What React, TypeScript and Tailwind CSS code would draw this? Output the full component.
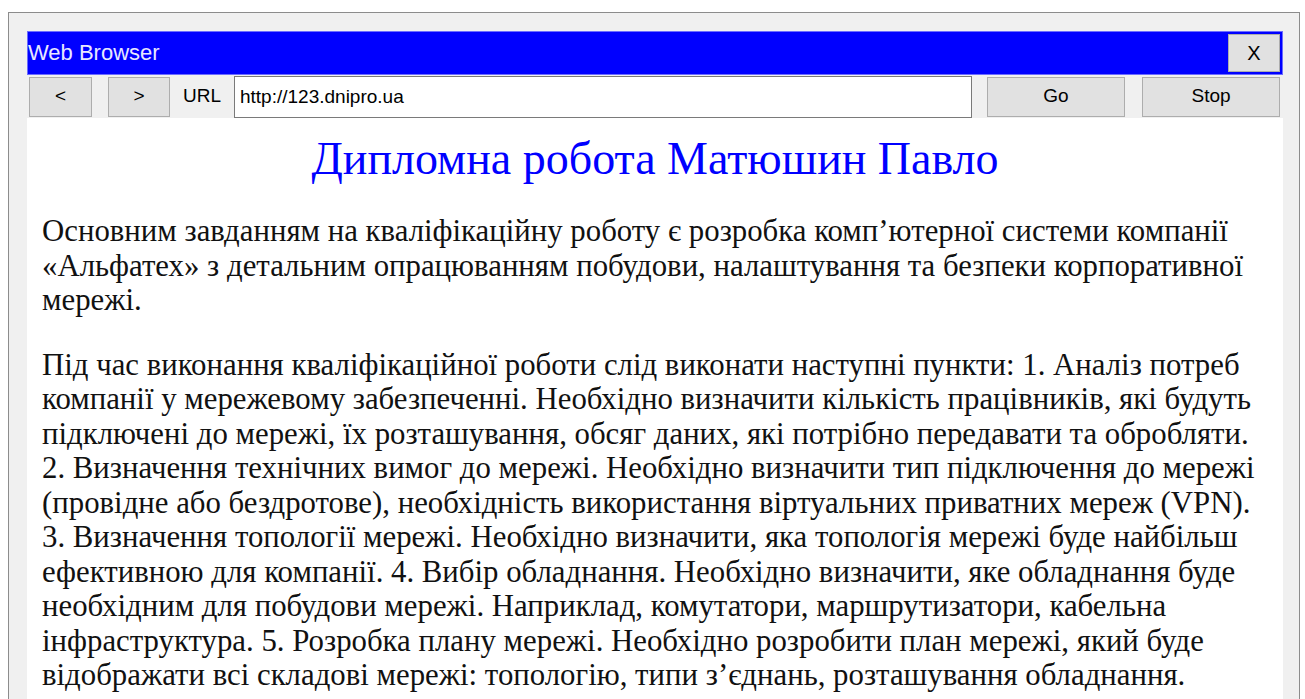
const intro = [
  "Основним завданням на кваліфікаційну роботу є розробка комп’ютерної системи компанії",
  "«Альфатех» з детальним опрацюванням побудови, налаштування та безпеки корпоративної",
  "мережі.",
];

const tasks = [
  "Під час виконання кваліфікаційної роботи слід виконати наступні пункти: 1. Аналіз потреб",
  "компанії у мережевому забезпеченні. Необхідно визначити кількість працівників, які будуть",
  "підключені до мережі, їх розташування, обсяг даних, які потрібно передавати та обробляти.",
  "2. Визначення технічних вимог до мережі. Необхідно визначити тип підключення до мережі",
  "(провідне або бездротове), необхідність використання віртуальних приватних мереж (VPN).",
  "3. Визначення топології мережі. Необхідно визначити, яка топологія мережі буде найбільш",
  "ефективною для компанії. 4. Вибір обладнання. Необхідно визначити, яке обладнання буде",
  "необхідним для побудови мережі. Наприклад, комутатори, маршрутизатори, кабельна",
  "інфраструктура. 5. Розробка плану мережі. Необхідно розробити план мережі, який буде",
  "відображати всі складові мережі: топологію, типи з’єднань, розташування обладнання.",
];

function ToolButton({ label, className }: { label: string; className: string }) {
  return (
    <button
      type="button"
      className={`h-[40px] shrink-0 border border-[#adadad] bg-[#e1e1e1] text-[19px] text-black ${className}`}
    >
      {label}
    </button>
  );
}

function Paragraph({ lines }: { lines: string[] }) {
  return (
    <p className="mb-[30px]">
      {lines.map((line) => (
        <span key={line} className="block whitespace-nowrap">
          {line}
        </span>
      ))}
    </p>
  );
}

export default function App() {
  return (
    <div className="h-[699px] overflow-hidden bg-white pl-[8px] pt-[12px]">
      <div className="flex h-[720px] w-[1292px] flex-col border border-[#8c8c8c] bg-[#f0f0f0] pl-[18px] pr-[16px] pt-[18px] font-['Liberation_Sans',sans-serif]">
        {/* title bar */}
        <div className="flex h-[44px] items-center justify-between border border-[#6c6cff] bg-[#0000ff] pr-[2px]">
          <span className="text-[22px] leading-none text-[#e8e8ff]">Web Browser</span>
          <button
            type="button"
            className="h-[38px] w-[52px] border border-[#adadad] bg-[#e1e1e1] text-[20px] text-black"
          >
            X
          </button>
        </div>

        {/* navigation row */}
        <div className="flex h-[43px] items-center">
          <ToolButton label="<" className="ml-[2px] w-[63px]" />
          <ToolButton label=">" className="ml-[16px] w-[62px]" />
          <span className="ml-[13px] w-[51px] text-[19px] text-black">URL</span>
          <input
            readOnly
            value="http://123.dnipro.ua"
            className="h-[42px] w-[738px] border border-[#7a7a7a] bg-white px-[5px] text-[19px] text-black outline-none"
          />
          <ToolButton label="Go" className="ml-[15px] w-[138px]" />
          <ToolButton label="Stop" className="ml-[17px] w-[138px]" />
        </div>

        {/* page content */}
        <div className="flex-1 bg-white px-[15px] pt-[14px] font-['Liberation_Serif',serif] text-[#111]">
          <h1 className="text-center text-[46px] leading-[54px] text-[#0000ff]">
            Дипломна робота Матюшин Павло
          </h1>
          <div className="mt-[28px] text-[30.8px] leading-[34.5px]">
            <Paragraph lines={intro} />
            <Paragraph lines={tasks} />
          </div>
        </div>
      </div>
    </div>
  );
}
